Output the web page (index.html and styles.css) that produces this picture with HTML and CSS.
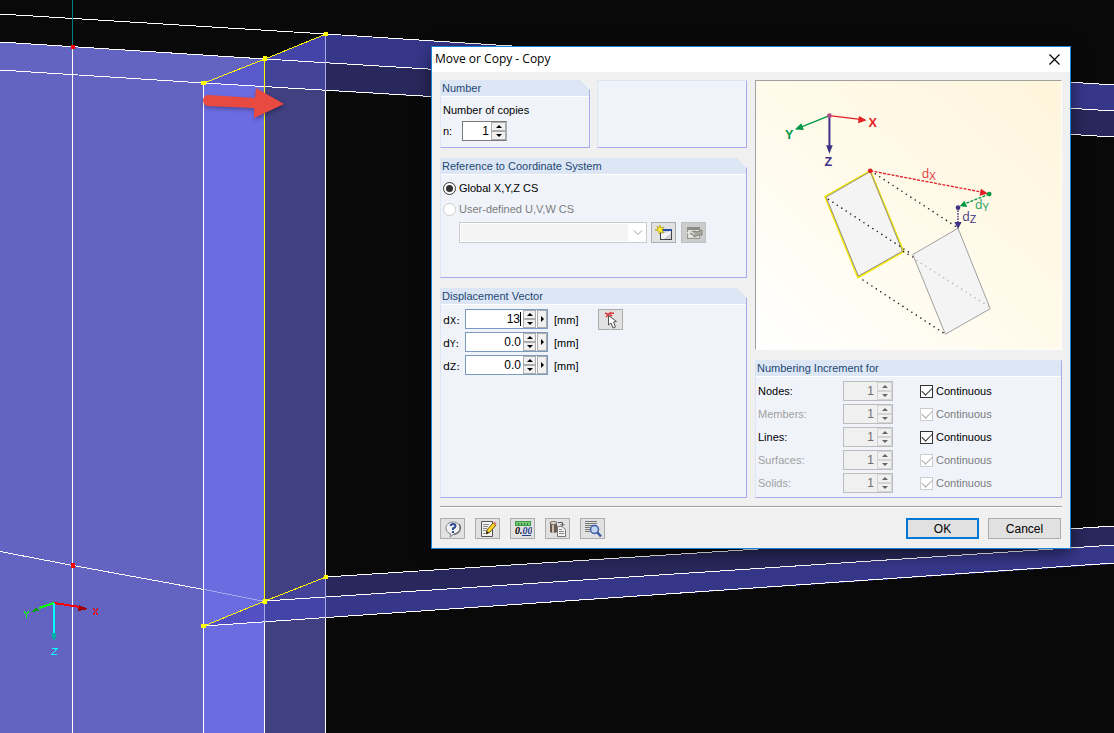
FILE: index.html
```html
<!DOCTYPE html>
<html lang="en">
<head>
  <meta charset="UTF-8">
  <title>Move or Copy - Copy</title>
  <meta name="viewport" content="width=device-width, initial-scale=1.0">
  <link rel="stylesheet" href="styles.css">
</head>
<body>

  <!-- 3D model view -->
  <svg class="scene" viewBox="0 0 1114 733" preserveAspectRatio="xMinYMin slice" shape-rendering="crispEdges" aria-hidden="true">
    <!-- column -->
    <polygon fill="#6363c2" points="0,42 265,59 204,83 204,733 0,733"/>
    <polygon fill="#6b6ce0" points="204,83 265,87 265,733 204,733"/>
    <polygon fill="#5a59cc" points="204,83 265,59 265,87"/>
    <polygon fill="#414182" points="265,87 326,91 326,733 265,733"/>
    <polygon fill="#44439a" points="265,59 326,63 326,91 265,87"/>
    <polygon fill="#4443a8" points="265,59 326,34 326,63"/>
    <!-- upper beam -->
    <polygon fill="#37378a" points="326,34 1114,85 1114,111 326,63"/>
    <polygon fill="#29285c" points="326,63 1114,111 1114,137 326,91"/>
    <!-- lower beam -->
    <polygon fill="#29285c" points="326,577 1114,526 1114,545 326,597"/>
    <polygon fill="#37378a" points="326,597 1114,545 1114,564 326,618"/>
    <polygon fill="#44439a" points="265,601 326,577 326,597"/>
    <polygon fill="#4443a8" points="265,601 326,597 326,618 265,622"/>
    <polygon fill="#5250c2" points="204,626 265,601 265,622"/>

    <g fill="none" stroke="#fff">
      <path d="M0 14L326 34L1114 85"/>
      <path d="M0 42L265 59L1114 111"/>
      <path d="M0 70L204 83L1114 137"/>
      <path d="M0 551.500L73 565.500L204 589.500"/>
      <path d="M326 577L1114 526M265 601L1114 545M204 626L1114 563"/>
      <path d="M72.500 47V733M203.500 83V733M264.500 601V733M325.500 91V733"/>
      <path stroke="#a9a8ea" d="M204 589.500L265 601.500M325.500 34V91M325.500 577V618M264.500 601V622"/>
    </g>
    <path stroke="#008080" d="M72.500 0V47"/>
    <path fill="none" stroke="#ff0" d="M204 83L265 59L326 34M264.500 59V601M204 626L265 601L326 577"/>

    <g fill="#ff0">
      <rect x="201" y="81" width="5" height="4"/>
      <rect x="263" y="56" width="4" height="5"/>
      <rect x="324" y="32" width="4" height="4"/>
      <rect x="201" y="624" width="5" height="4"/>
      <rect x="263" y="599" width="4" height="5"/>
      <rect x="324" y="575" width="4" height="4"/>
    </g>
    <g fill="#f00">
      <rect x="71" y="45" width="4" height="4"/>
      <rect x="71" y="563" width="4" height="5"/>
    </g>

    <!-- view axes -->
    <g fill="none" stroke-width="2">
      <path stroke="#0f0" d="M54 603L39 608"/>
      <path stroke="#f00" d="M54 603L80 607"/>
      <path stroke="#0ff" d="M54 603V633"/>
    </g>
    <path fill="#00a000" d="M31 612L36 607L39 611Z"/>
    <path fill="#a00000" d="M79 605L88 609L78 611Z"/>
    <path fill="#00a8a8" d="M51 633H56V637L54 641L52 637Z"/>
    <g fill="none">
      <path stroke="#0f0" d="M24 611L26.500 615L29 611M26.500 615V618"/>
      <path stroke="#f00" d="M93 608L98 615M98 608L93 615"/>
      <path stroke="#0ff" d="M52 648.500H57L52 654.500H57"/>
    </g>

    <!-- move direction -->
    <g shape-rendering="auto">
      <path class="arrow-shadow" d="M208 98L256 100L256 90L285 106L255 120L255 110L208 108Q203 105 204 101Z"/>
      <path fill="#e84a42" d="M208 95L255 98L256 88L284 104L254 118L254 108L207 106Q203 104 203 100Q204 95 208 95Z"/>
    </g>
  </svg>

  <form class="dialog" role="dialog" aria-labelledby="dialog-title">
    <header class="title-bar">
      <h1 class="title" id="dialog-title">Move or Copy - Copy</h1>
      <button class="close" type="button" aria-label="Close">
        <svg width="11" height="11" viewBox="0 0 11 11"><path d="M.5 .5L10.500 10.500M10.500 .5L.5 10.500" stroke="#000" stroke-width="1.200" fill="none"/></svg>
      </button>
    </header>

    <main class="content">
      <div class="column">
        <div class="top-row">
          <section class="panel cut panel-number">
            <h2 class="panel-title">Number</h2>
            <div class="number-body">
              <label for="copies">Number of copies</label>
              <div class="number-row">
                <label class="n-label" for="copies">n:</label>
                <div class="spin spin-small">
                  <input id="copies" type="text" value="1">
                  <span class="steps"><button type="button" class="up" aria-label="More copies"></button><button type="button" class="down" aria-label="Fewer copies"></button></span>
                </div>
              </div>
            </div>
          </section>
          <section class="panel"></section>
        </div>

        <section class="panel cut panel-reference">
          <h2 class="panel-title">Reference to Coordinate System</h2>
          <div class="reference-body">
            <label class="choice"><input type="radio" name="cs" checked>Global X,Y,Z CS</label>
            <label class="choice off"><input type="radio" name="cs" disabled>User-defined U,V,W CS</label>
            <div class="cs-row">
              <div class="combo">
                <select aria-label="Coordinate system" disabled><option></option></select>
                <svg width="10" height="6" viewBox="0 0 10 6"><path d="M1 .5L5 4.500L9 .5" fill="none" stroke="#a0a0a0"/></svg>
              </div>
              <button class="tool" type="button" aria-label="New coordinate system">
                <svg width="18" height="16" viewBox="0 0 18 16">
                  <rect x="5.500" y="4.500" width="11" height="10" fill="#d0d0d6" stroke="#444"/>
                  <path d="M6 9L16 6V8L9 14H6Z" fill="#f4f4f4"/>
                  <path d="M5 4H17V6H5Z" fill="#2b4ea8"/>
                  <path d="M5 0L6 3L9 2L7 5L9 8L6 7L4 9L4 6L0 5L3 4L2 1L4 3Z" fill="#ffee2e" stroke="#a89400" stroke-width=".6"/>
                </svg>
              </button>
              <button class="tool tool-off" type="button" aria-label="Edit coordinate system" disabled>
                <svg width="18" height="16" viewBox="0 0 18 16">
                  <rect x="2.500" y="2.500" width="12" height="11" fill="#deded9" stroke="#96968e"/>
                  <path d="M2 2H15V5H2Z" fill="#8d8d86"/>
                  <path d="M5 8L9 6L12 7L17 5V10L13 10L10 12L7 10Z" fill="#a9a9a2" stroke="#80807a"/>
                  <path d="M2 8L6 7L9 9M4 11H8" stroke="#f6f6f2" fill="none"/>
                </svg>
              </button>
            </div>
          </div>
        </section>

        <section class="panel cut panel-vector">
          <h2 class="panel-title">Displacement Vector</h2>
          <div class="vector-body">
            <div class="vector-rows">
              <div class="vector-row">
                <label class="axis" for="dx">d<small>X</small>:</label>
                <div class="spin spin-length">
                  <input id="dx" type="text" value="13"><i class="caret"></i>
                  <span class="steps"><button type="button" class="up" aria-label="Increase dX"></button><button type="button" class="down" aria-label="Decrease dX"></button></span>
                  <button type="button" class="more" aria-label="dX options"></button>
                </div>
                <span class="unit">[mm]</span>
              </div>
              <div class="vector-row">
                <label class="axis" for="dy">d<small>Y</small>:</label>
                <div class="spin spin-length">
                  <input id="dy" type="text" value="0.0">
                  <span class="steps"><button type="button" class="up" aria-label="Increase dY"></button><button type="button" class="down" aria-label="Decrease dY"></button></span>
                  <button type="button" class="more" aria-label="dY options"></button>
                </div>
                <span class="unit">[mm]</span>
              </div>
              <div class="vector-row">
                <label class="axis" for="dz">d<small>Z</small>:</label>
                <div class="spin spin-length">
                  <input id="dz" type="text" value="0.0">
                  <span class="steps"><button type="button" class="up" aria-label="Increase dZ"></button><button type="button" class="down" aria-label="Decrease dZ"></button></span>
                  <button type="button" class="more" aria-label="dZ options"></button>
                </div>
                <span class="unit">[mm]</span>
              </div>
            </div>
            <button class="tool" type="button" aria-label="Pick in view">
              <svg width="18" height="18" viewBox="0 0 18 18">
                <path d="M3 2L10 5M9 1L4 6M6 3L12 2" stroke="#e03a3a" stroke-width="1.500" fill="none"/>
                <path d="M6.500 4.500V14L9 12L11 17L13.500 16L11.500 11L14.500 10.500Z" fill="#fff" stroke="#555"/>
              </svg>
            </button>
          </div>
        </section>
      </div>

      <div class="column">
        <div class="preview">
          <svg viewBox="16 18 918 804" aria-hidden="true">
            <!-- axes -->
            <g fill="none" stroke-width="4">
              <path stroke="#e31e24" d="M237 121L330 132"/>
              <path stroke="#009846" d="M237 121L155 154"/>
              <path stroke="#3e3285" stroke-width="6" d="M237 121V212"/>
            </g>
            <path fill="#e31e24" d="M349 135L323 144L326 122Z"/>
            <path fill="#009846" d="M133 163L152 144L160 164Z"/>
            <path fill="#3e3285" d="M227 210H247L237 236Z"/>
            <circle cx="237" cy="121" r="7" fill="#b04a86"/>
            <text class="axis-name" x="355" y="156" fill="#e31e24">X</text>
            <text class="axis-name" x="103" y="192" fill="#009846">Y</text>
            <text class="axis-name" x="222" y="273" fill="#3e3285">Z</text>

            <!-- original and copy -->
            <path d="M360 287L224 365L323 608L460 530Z" fill="#f4f4f4" stroke="#f9ea10" stroke-width="6"/>
            <path d="M360 289L227 366L324 604L457 529Z" fill="none" stroke="#8f8f8f" stroke-width="3"/>
            <path d="M624 460L488 539L586 779L721 702Z" fill="#f4f4f4" stroke="#a0a0a0" stroke-width="3"/>
            <g class="dots">
              <path d="M375 296L622 458"/>
              <path d="M234 373L488 540"/>
              <path d="M460 530L490 548"/>
              <path d="M338 616L583 777"/>
              <path stroke="#b8b8b8" d="M500 557L716 695"/>
            </g>

            <!-- displacement -->
            <g fill="none" stroke-width="4" stroke-dasharray="9 4">
              <path stroke="#e31e24" d="M360 287L695 351"/>
              <path stroke="#009846" d="M718 357L648 385"/>
              <path stroke="#3e3285" stroke-dasharray="5 3" d="M624 398V442"/>
            </g>
            <path fill="#e31e24" d="M714 355L689 362L693 341Z"/>
            <path fill="#009846" d="M629 394L643 377L652 396Z"/>
            <path fill="#3e3285" d="M613 441H635L624 462Z"/>
            <circle cx="360" cy="287" r="7" fill="#e31e24"/>
            <circle cx="718" cy="357" r="7" fill="#009846"/>
            <circle cx="624" cy="398" r="7" fill="#3e3285"/>
            <text class="shift-name" x="515" y="309" fill="#e53238">d<tspan class="sub" dy="5">X</tspan></text>
            <text class="shift-name" x="675" y="402" fill="#1a9e57">d<tspan class="sub" dy="5">Y</tspan></text>
            <text class="shift-name" x="637" y="439" fill="#3e3285">d<tspan class="sub" dy="5">Z</tspan></text>
          </svg>
        </div>

        <section class="panel panel-numbering">
          <h2 class="panel-title">Numbering Increment for</h2>
          <div class="numbering-body">
            <div class="inc-row">
              <label for="inc-nodes">Nodes:</label>
              <div class="spin spin-off"><input id="inc-nodes" type="text" value="1" disabled><span class="steps"><button type="button" class="up" aria-label="Increase" disabled></button><button type="button" class="down" aria-label="Decrease" disabled></button></span></div>
              <label class="choice"><input type="checkbox" checked>Continuous</label>
            </div>
            <div class="inc-row off">
              <label for="inc-members">Members:</label>
              <div class="spin spin-off"><input id="inc-members" type="text" value="1" disabled><span class="steps"><button type="button" class="up" aria-label="Increase" disabled></button><button type="button" class="down" aria-label="Decrease" disabled></button></span></div>
              <label class="choice off"><input type="checkbox" checked disabled>Continuous</label>
            </div>
            <div class="inc-row">
              <label for="inc-lines">Lines:</label>
              <div class="spin spin-off"><input id="inc-lines" type="text" value="1" disabled><span class="steps"><button type="button" class="up" aria-label="Increase" disabled></button><button type="button" class="down" aria-label="Decrease" disabled></button></span></div>
              <label class="choice"><input type="checkbox" checked>Continuous</label>
            </div>
            <div class="inc-row off">
              <label for="inc-surfaces">Surfaces:</label>
              <div class="spin spin-off"><input id="inc-surfaces" type="text" value="1" disabled><span class="steps"><button type="button" class="up" aria-label="Increase" disabled></button><button type="button" class="down" aria-label="Decrease" disabled></button></span></div>
              <label class="choice off"><input type="checkbox" checked disabled>Continuous</label>
            </div>
            <div class="inc-row off">
              <label for="inc-solids">Solids:</label>
              <div class="spin spin-off"><input id="inc-solids" type="text" value="1" disabled><span class="steps"><button type="button" class="up" aria-label="Increase" disabled></button><button type="button" class="down" aria-label="Decrease" disabled></button></span></div>
              <label class="choice off"><input type="checkbox" checked disabled>Continuous</label>
            </div>
          </div>
        </section>
      </div>
    </main>

    <footer class="footer">
      <div class="tools">
        <button class="tool" type="button" aria-label="Help">
          <svg width="18" height="18" viewBox="0 0 18 18">
            <path d="M9 2C13 2 16 4.500 16 8C16 11.500 13 13.500 10 14L6 17L7 14C4 13 2 11 2 8C2 4.500 5 2 9 2Z" fill="#f2f2f2" stroke="#858585"/>
            <path d="M15 4C18 8 16 13 10 14.500" fill="none" stroke="#777" stroke-width="1.500"/>
            <path d="M6.500 6Q7 4 9 4Q11.500 4 11.500 6Q11.500 7.500 9 8.500V10" fill="none" stroke="#2b4a94" stroke-width="2"/>
            <rect x="8" y="11" width="2" height="2" fill="#2b4a94"/>
          </svg>
        </button>
        <button class="tool" type="button" aria-label="Comment">
          <svg width="18" height="18" viewBox="0 0 18 18">
            <path d="M2.500 1.500H13.500V16.500H2.500Z" fill="#f4f4f4" stroke="#555"/>
            <path d="M4 4.500H10M4 6.500H9M4 8.500H8M4 10.500H7M4 13.500H6" stroke="#888"/>
            <path d="M7 14L8 10L14 3L17 5L11 12Z" fill="#ffd62e" stroke="#6b5200"/>
            <path d="M14 3L15 1.500Q17 1 17.500 3.500L17 5Z" fill="#ea8b8b"/>
            <path d="M7 14L8 11L10 13Z" fill="#222"/>
          </svg>
        </button>
        <button class="tool" type="button" aria-label="Units and decimal places">
          <svg width="18" height="18" viewBox="0 0 18 18">
            <rect x="1.500" y="1.500" width="15" height="4" fill="#76c976" stroke="#3f9a46"/>
            <path d="M4.500 3V5M7.500 3V5M10.500 3V5M13.500 3V5" stroke="#2e7d36"/>
            <text class="decimals" x="1" y="14">0.<tspan fill="#23418c">00</tspan></text>
            <path d="M8 15.500H17" stroke="#23418c"/>
          </svg>
        </button>
        <button class="tool" type="button" aria-label="Copy material">
          <svg width="18" height="18" viewBox="0 0 18 18">
            <path d="M1 3V12Q4 14 8 12V3Z" fill="#685a4e"/>
            <path d="M3 4V13H5V4Z" fill="#cbbfb2"/>
            <ellipse cx="4.500" cy="3" rx="3.500" ry="1.500" fill="#e5ddd3" stroke="#6d6258"/>
            <path d="M9 2.500H13.500V5M11.500 4L13.500 6L15.500 4" fill="none" stroke="#555"/>
            <path d="M8.500 6.500H13L16.500 9.500V16.500H8.500Z" fill="#f3f3f3" stroke="#777"/>
            <path d="M10 9.500H13M10 11.500H15M10 13.500H15" stroke="#888"/>
          </svg>
        </button>
        <button class="tool" type="button" aria-label="Details">
          <svg width="18" height="18" viewBox="0 0 18 18">
            <path d="M1 1.500H13M1 3.500H13M1 5.500H13M1 7.500H6M1 9.500H6M1 11.500H6" stroke="#777"/>
            <circle cx="10.500" cy="9.500" r="4" fill="#c3d5f2" stroke="#3c5ca8" stroke-width="1.500"/>
            <path d="M13 12L17 16.500" stroke="#3c5ca8" stroke-width="2.500"/>
          </svg>
        </button>
      </div>
      <div class="actions">
        <button class="action action-default" type="submit">OK</button>
        <button class="action" type="button">Cancel</button>
      </div>
    </footer>
  </form>

</body>
</html>
```
FILE: styles.css
```css
* {
  box-sizing: border-box;
}

body {
  margin: 0;
  min-height: 100vh;
  background: #090909;
  color: #000;
  font-family: "Liberation Sans", Arial, sans-serif;
  font-size: 11px;
  line-height: 14px;
  overflow: hidden;
}

h1,
h2 {
  margin: 0;
  font-weight: normal;
}

button,
input,
select {
  margin: 0;
  padding: 0;
  font: inherit;
  color: inherit;
}

/* model view */
.scene {
  position: absolute;
  left: 0;
  top: 0;
  width: 100%;
  height: 100%;
}

.arrow-shadow {
  fill: #000;
  opacity: 0.3;
  filter: blur(2px);
}

/* dialog window */
.dialog {
  position: absolute;
  left: 431px;
  top: 46px;
  width: 640px;
  border: 1px solid #1883d7;
  background: #f0f0f0;
  box-shadow: 0 5px 16px rgba(0, 0, 0, 0.5);
}

.title-bar {
  display: flex;
  align-items: center;
  justify-content: space-between;
  height: 25px;
  padding: 0 9px 1px 3px;
  background: #fff;
}

.title {
  font-family: "Open Sans", "Noto Sans", sans-serif;
  font-size: 12px;
}

.close {
  display: flex;
  padding: 1px;
  border: 0;
  background: none;
}

.content {
  display: grid;
  grid-template-columns: 1fr 1fr;
  gap: 8px;
  padding: 8px;
}

.column {
  display: flex;
  flex-direction: column;
  gap: 10px;
}

.top-row {
  display: grid;
  grid-template-columns: 1fr 1fr;
  gap: 7px;
}

/* panels */
.panel {
  border: 1px solid #dce6f4;
  border-right-color: #a9a9ec;
  border-bottom-color: #a9a9ec;
  background: #f0f4fa;
}

.cut {
  clip-path: polygon(0 0, calc(100% - 10px) 0, 100% 10px, 100% 100%, 0 100%);
}

.panel-title {
  height: 16px;
  padding-left: 1px;
  border-bottom: 1px solid #fff;
  background: #dce6f4;
  color: #1d4873;
  font-size: 11px;
  line-height: 15px;
}

.panel-number {
  min-height: 68px;
}

.panel-reference {
  min-height: 120px;
}

.panel-vector {
  flex: 1;
  min-height: 210px;
}

.panel-numbering {
  flex: 1;
}

.number-body {
  padding: 6px 2px;
}

.number-row {
  display: flex;
  align-items: center;
  margin-top: 4px;
}

.n-label {
  width: 19px;
}

.reference-body {
  padding: 6px 2px;
}

.choice {
  display: flex;
  align-items: center;
  gap: 3px;
}

.reference-body .choice {
  height: 14px;
  margin-bottom: 7px;
}

.choice.off {
  color: #7c7c7c;
}

.choice input {
  appearance: none;
  display: flex;
  align-items: center;
  justify-content: center;
  width: 13px;
  height: 13px;
  border: 1px solid #333;
  background: #fff;
}

.choice input[type="radio"] {
  border-radius: 50%;
}

.choice input[type="radio"]:checked::before {
  content: "";
  width: 7px;
  height: 7px;
  border-radius: 50%;
  background: #333;
}

.choice input[type="checkbox"]:checked::before {
  content: "";
  width: 9px;
  height: 5px;
  margin-bottom: 3px;
  border: solid #333;
  border-width: 0 0 1px 1px;
  transform: rotate(-45deg);
}

.choice input:disabled {
  border-color: #ccc;
}

.choice input[type="checkbox"]:disabled::before {
  border-color: #aaa;
}

.cs-row {
  display: flex;
  gap: 4px;
  margin-left: 16px;
  margin-top: -1px;
}

.cs-row .tool + .tool {
  margin-left: 1px;
}

.combo {
  display: flex;
  align-items: center;
  width: 188px;
  height: 21px;
  padding: 1px 3px 1px 1px;
  border: 1px solid #ccc;
  background: #fff;
}

.combo select {
  appearance: none;
  flex: 1;
  align-self: stretch;
  margin-right: 5px;
  border: 0;
  background: #f0f0f0;
}

/* number boxes with arrows */
.spin {
  display: flex;
  height: 20px;
  border: 1px solid #7a7a7a;
  background: #fff;
}

.spin-small {
  width: 45px;
  border-right-color: #adadad;
}

.spin input {
  flex: 1;
  width: 0;
  padding-right: 2px;
  border: 0;
  background: none;
  text-align: right;
  font-size: 12px;
}

.steps {
  display: flex;
  flex-direction: column;
  width: 15px;
}

.steps button,
.more {
  display: flex;
  flex: 1;
  align-items: center;
  justify-content: center;
  border: 1px solid #adadad;
  background: #f0f0f0;
}

.up::before,
.down::before,
.more::before {
  content: "";
  border: 3px solid transparent;
}

.up::before {
  border-top: 0;
  border-bottom-color: #000;
}

.down::before {
  border-bottom: 0;
  border-top-color: #000;
}

.more::before {
  border-right: 0;
  border-left-color: #000;
}

.spin-length {
  width: 83px;
  border-color: #7a9abf;
}

.spin-length .steps {
  width: 13px;
}

.spin .more {
  flex: 0 0 10px;
  margin-left: 1px;
}

.caret {
  width: 1px;
  margin: 2px 2px 2px -2px;
  background: #000;
}

.spin-off {
  border-color: #bdbdbd;
  background: #f0f0f0;
  color: #6d6d6d;
}

.spin-off input {
  padding-right: 3px;
}

.spin-off .steps button {
  border-color: #d4d4d4;
}

.spin-off .up::before {
  border-bottom-color: #666;
}

.spin-off .down::before {
  border-top-color: #666;
}

/* displacement */
.vector-body {
  display: flex;
  align-items: flex-start;
  gap: 20px;
  padding: 4px 2px;
}

.vector-rows {
  display: flex;
  flex-direction: column;
  gap: 3px;
}

.vector-row {
  display: flex;
  align-items: center;
}

.unit {
  margin-left: 6px;
  padding-top: 1px;
}

.axis {
  width: 22px;
  padding-top: 3px;
  font-family: "DejaVu Sans", sans-serif;
}

.axis small {
  font-size: 9px;
}

/* preview picture */
.preview {
  height: 270px;
  border: 1px solid #fff;
  border-top-color: #a0a0a0;
  border-left-color: #a0a0a0;
  background: linear-gradient(to top right, #fff, #fffaea 50%, #fff5dc);
}

.preview svg {
  display: block;
  width: 100%;
  height: 100%;
}

.axis-name {
  font-size: 38px;
  font-weight: bold;
}

.shift-name {
  font-family: "Open Sans", "Noto Sans", sans-serif;
  font-size: 37px;
}

.sub {
  font-size: 34px;
}

.dots {
  fill: none;
  stroke: #222;
  stroke-width: 5;
  stroke-linecap: round;
  stroke-dasharray: 0 16;
}

/* numbering */
.numbering-body {
  display: flex;
  flex-direction: column;
  gap: 3px;
  padding: 4px 2px;
}

.inc-row {
  display: grid;
  grid-template-columns: 85px 50px 1fr;
  align-items: center;
}

.inc-row.off {
  color: #a0a0a0;
}

.inc-row .choice {
  margin-left: 27px;
}

/* buttons */
.tool {
  display: flex;
  align-items: center;
  justify-content: center;
  width: 25px;
  height: 21px;
  border: 1px solid #adadad;
  background: #e1e1e1;
}

.tool-off {
  background: #ccc;
  border-color: #bfbfbf;
}

.decimals {
  font-family: "Liberation Serif", serif;
  font-size: 10px;
  font-style: italic;
  font-weight: bold;
}

.footer {
  display: flex;
  justify-content: space-between;
  margin: 0 8px;
  padding: 11px 1px 9px 0;
  border-top: 1px solid #a0a0a0;
  box-shadow: inset 0 1px #fff;
}

.tools {
  display: flex;
  gap: 10px;
}

.actions {
  display: flex;
  gap: 9px;
}

.action {
  width: 73px;
  height: 21px;
  border: 1px solid #adadad;
  background: #e1e1e1;
  font-size: 12px;
}

.action-default {
  border: 2px solid #0078d7;
}
```
